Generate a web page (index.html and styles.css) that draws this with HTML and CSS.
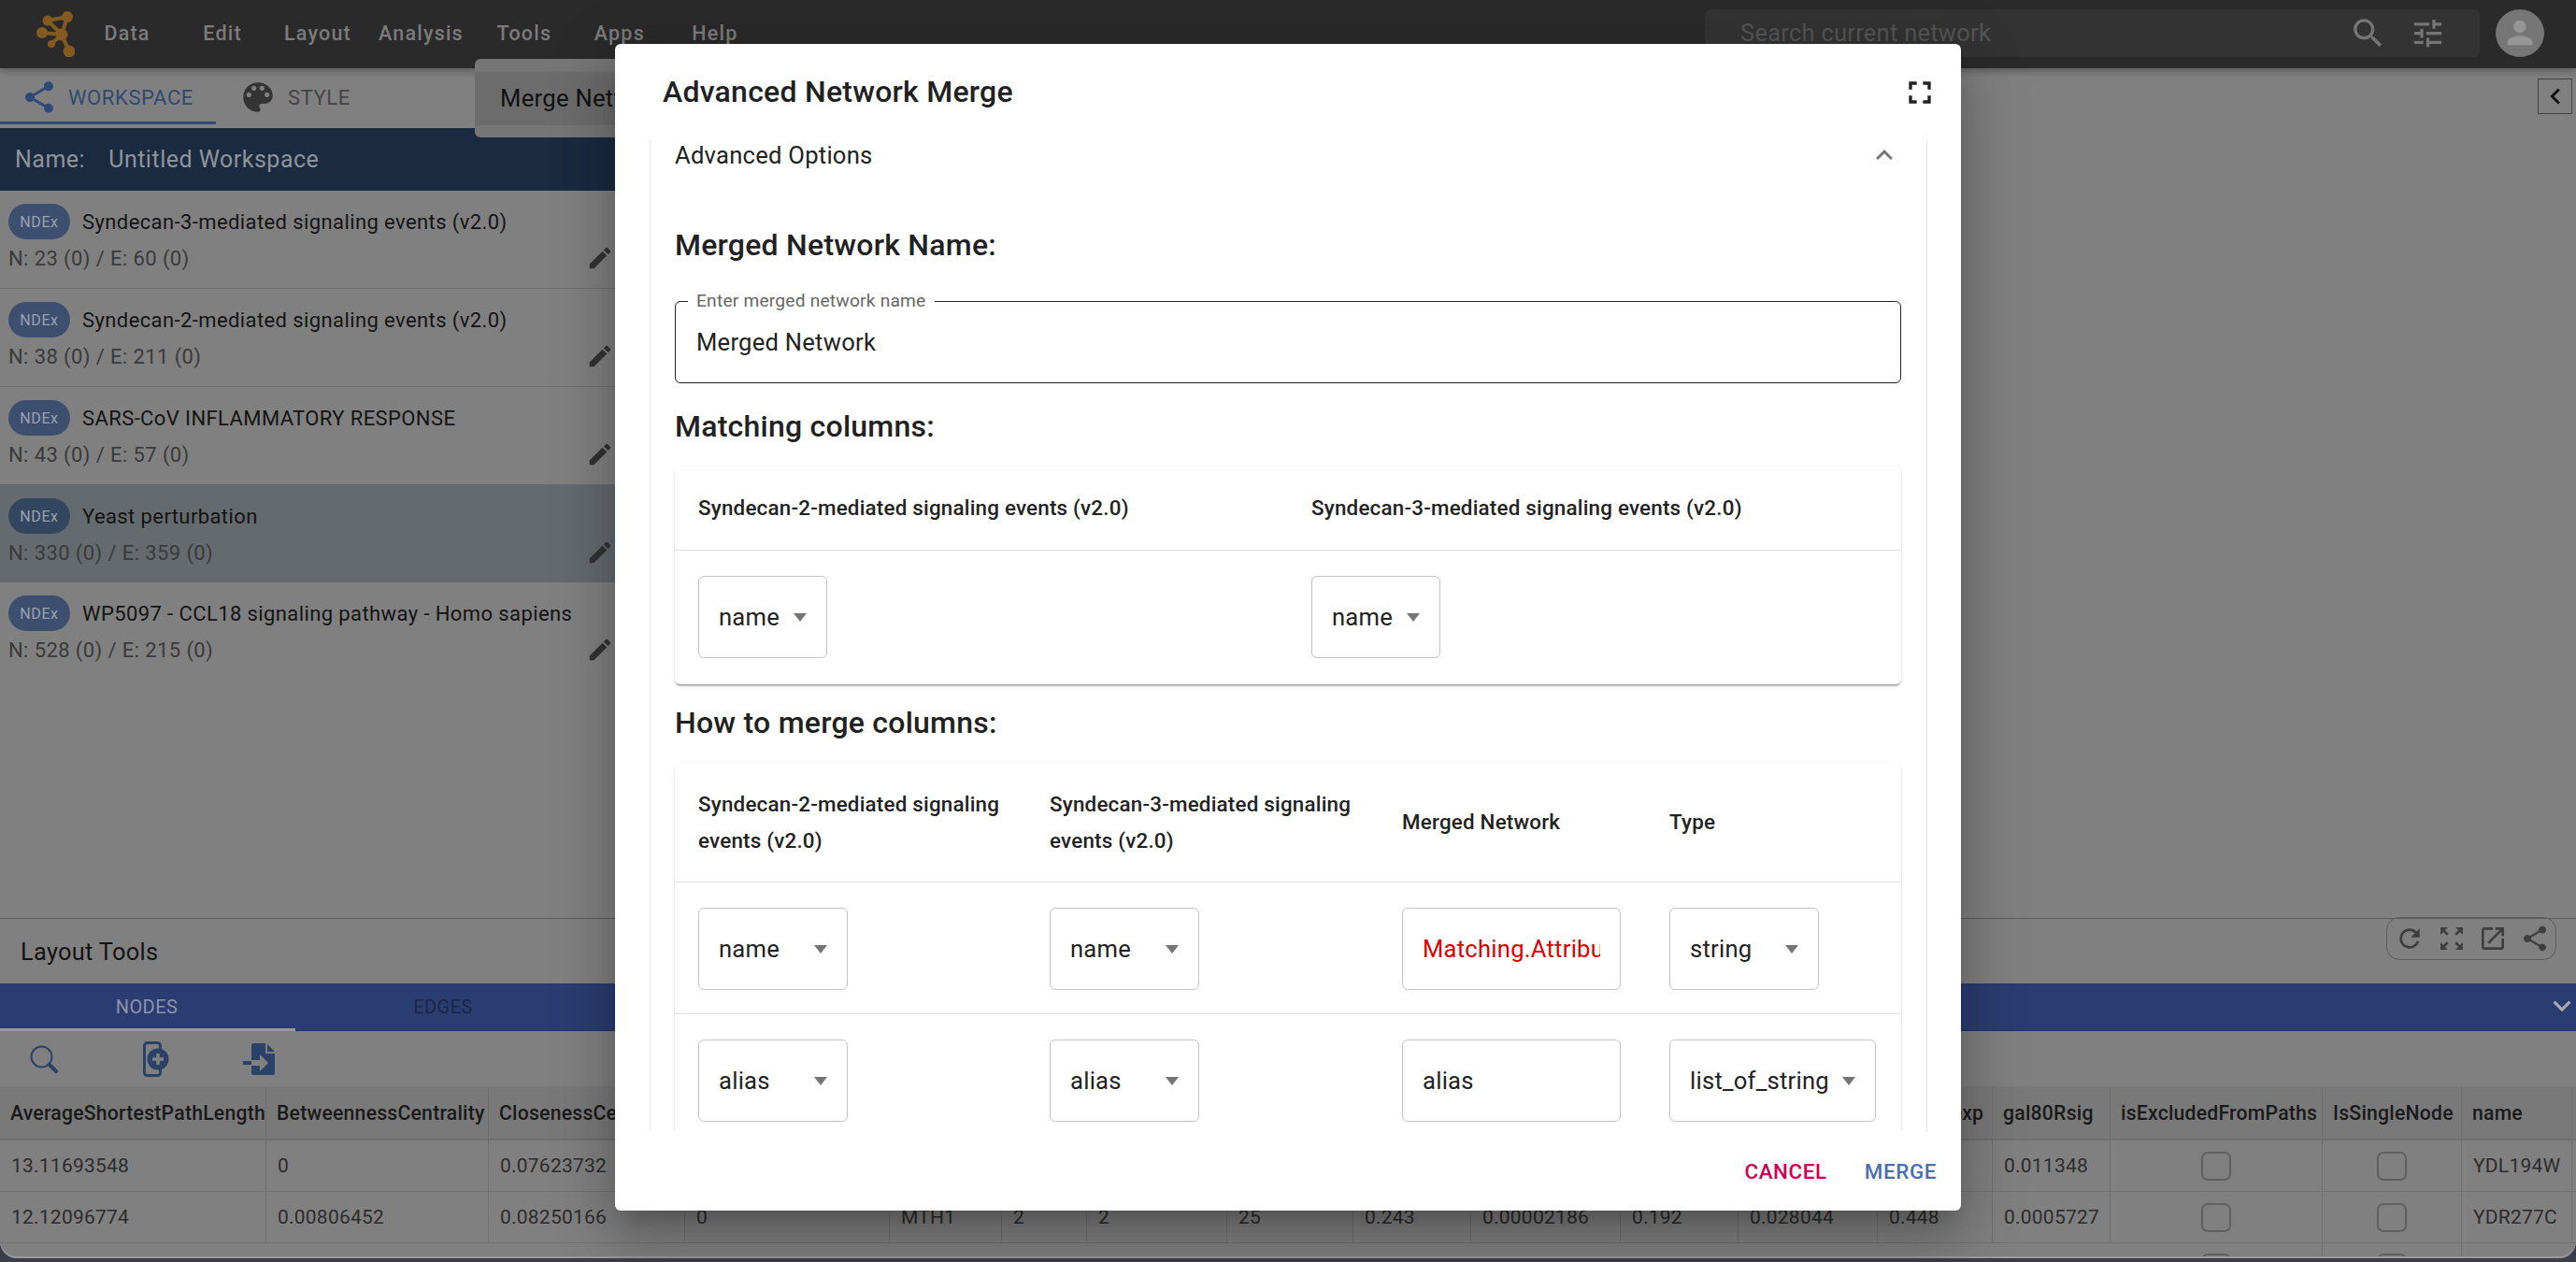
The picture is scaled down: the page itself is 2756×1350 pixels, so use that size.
FILE: index.html
```html
<!DOCTYPE html>
<html lang="en">
<head>
<meta charset="utf-8">
<title>Advanced Network Merge</title>
<link rel="stylesheet" href="styles.css">
</head>
<body>
<div class="app">
  <header class="appbar">
    <svg class="logo" viewBox="0 0 41 50" width="41" height="50"><g stroke="#845a20" stroke-width="4" fill="#845a20"><path d="M12 11 33 7 27 26ZM6 24 27 26M16 36 27 26M35 44 27 26" fill="none"/><circle cx="33" cy="7" r="6" stroke="none"/><circle cx="12" cy="11" r="5.5" stroke="none"/><circle cx="6" cy="24" r="6" stroke="none"/><circle cx="27" cy="26" r="6.5" stroke="none"/><circle cx="16" cy="36" r="4" stroke="none"/><circle cx="35" cy="44" r="6.5" stroke="none"/></g></svg>
    <nav class="nav">
      <span class="nav-item">Data</span><span class="nav-item">Edit</span><span class="nav-item">Layout</span><span class="nav-item">Analysis</span><span class="nav-item">Tools</span><span class="nav-item">Apps</span><span class="nav-item">Help</span>
    </nav>
    <div class="search">
      <span class="search-text">Search current network</span>
      <svg class="ic-search" viewBox="0 0 24 24" width="41" height="41"><path d="M15.5 14h-.79l-.28-.27C15.41 12.59 16 11.11 16 9.5 16 5.91 13.09 3 9.5 3S3 5.91 3 9.5 5.91 16 9.5 16c1.61 0 3.09-.59 4.23-1.57l.27.28v.79l5 4.99L20.49 19l-4.99-5zm-6 0C7.01 14 5 11.99 5 9.5S7.01 5 9.5 5 14 7.01 14 9.5 11.99 14 9.5 14z"/></svg>
      <svg class="ic-search" viewBox="0 0 24 24" width="39" height="39"><path d="M3 17v2h6v-2H3zM3 5v2h10V5H3zm10 16v-2h8v-2h-8v-2h-2v6h2zM7 9v2H3v2h4v2h2V9H7zm14 4v-2H11v2h10zm-6-4h2V7h4V5h-4V3h-2v6z"/></svg>
    </div>
    <div class="avatar"><svg viewBox="0 0 24 24" width="40" height="40"><path d="M12 12c2.21 0 4-1.79 4-4s-1.79-4-4-4-4 1.79-4 4 1.79 4 4 4zm0 2c-2.67 0-8 1.34-8 4v2h16v-2c0-2.66-5.33-4-8-4z"/></svg></div>
  </header>

  <div class="main">
    <aside class="side">
      <div class="tabs">
        <div class="tab tab-active">
          <svg viewBox="0 0 24 24" width="40" height="40"><path d="M18 16.08c-.76 0-1.44.3-1.96.77L8.91 12.7c.05-.23.09-.46.09-.7s-.04-.47-.09-.7l7.05-4.11c.54.5 1.25.81 2.04.81 1.66 0 3-1.34 3-3s-1.34-3-3-3-3 1.34-3 3c0 .24.04.47.09.7L8.04 9.81C7.5 9.31 6.79 9 6 9c-1.66 0-3 1.34-3 3s1.34 3 3 3c.79 0 1.5-.31 2.04-.81l7.12 4.16c-.05.21-.08.43-.08.65 0 1.61 1.31 2.92 2.92 2.92 1.61 0 2.92-1.31 2.92-2.92s-1.31-2.92-2.92-2.92z"/></svg>
          <span>WORKSPACE</span>
        </div>
        <div class="tab tab-style">
          <svg viewBox="0 0 24 24" width="42" height="42"><path d="M12 3c-4.97 0-9 4.03-9 9s4.03 9 9 9c.83 0 1.5-.67 1.5-1.5 0-.39-.15-.74-.39-1.01-.23-.26-.38-.61-.38-.99 0-.83.67-1.5 1.5-1.5H16c2.76 0 5-2.24 5-5 0-4.42-4.03-8-9-8zm-5.5 9c-.83 0-1.5-.67-1.5-1.5S5.67 9 6.5 9 8 9.67 8 10.5 7.33 12 6.5 12zm3-4C8.67 8 8 7.33 8 6.5S8.67 5 9.5 5s1.5.67 1.5 1.5S10.33 8 9.5 8zm5 0c-.83 0-1.5-.67-1.5-1.5S13.67 5 14.5 5s1.5.67 1.5 1.5S15.33 8 14.5 8zm3 4c-.83 0-1.5-.67-1.5-1.5S16.67 9 17.5 9s1.5.67 1.5 1.5-.67 1.5-1.5 1.5z"/></svg>
          <span>STYLE</span>
        </div>
      </div>
      <div class="ws-name"><span>Name:</span><span>Untitled Workspace</span></div>
      <ul class="net-list">
        <li class="net">
          <div class="net-top"><span class="chip">NDEx</span><span class="net-title">Syndecan-3-mediated signaling events (v2.0)</span></div>
          <div class="net-sub"><span>N: 23 (0) / E: 60 (0)</span><svg viewBox="0 0 24 24" width="30" height="30"><path d="M3 17.25V21h3.75L17.81 9.94l-3.75-3.75L3 17.25zM20.71 7.04c.39-.39.39-1.02 0-1.41l-2.34-2.34a.9959.9959 0 0 0-1.41 0l-1.83 1.83 3.75 3.75 1.83-1.83z"/></svg></div>
        </li>
        <li class="net">
          <div class="net-top"><span class="chip">NDEx</span><span class="net-title">Syndecan-2-mediated signaling events (v2.0)</span></div>
          <div class="net-sub"><span>N: 38 (0) / E: 211 (0)</span><svg viewBox="0 0 24 24" width="30" height="30"><path d="M3 17.25V21h3.75L17.81 9.94l-3.75-3.75L3 17.25zM20.71 7.04c.39-.39.39-1.02 0-1.41l-2.34-2.34a.9959.9959 0 0 0-1.41 0l-1.83 1.83 3.75 3.75 1.83-1.83z"/></svg></div>
        </li>
        <li class="net">
          <div class="net-top"><span class="chip">NDEx</span><span class="net-title">SARS-CoV INFLAMMATORY RESPONSE</span></div>
          <div class="net-sub"><span>N: 43 (0) / E: 57 (0)</span><svg viewBox="0 0 24 24" width="30" height="30"><path d="M3 17.25V21h3.75L17.81 9.94l-3.75-3.75L3 17.25zM20.71 7.04c.39-.39.39-1.02 0-1.41l-2.34-2.34a.9959.9959 0 0 0-1.41 0l-1.83 1.83 3.75 3.75 1.83-1.83z"/></svg></div>
        </li>
        <li class="net net-selected">
          <div class="net-top"><span class="chip">NDEx</span><span class="net-title">Yeast perturbation</span></div>
          <div class="net-sub"><span>N: 330 (0) / E: 359 (0)</span><svg viewBox="0 0 24 24" width="30" height="30"><path d="M3 17.25V21h3.75L17.81 9.94l-3.75-3.75L3 17.25zM20.71 7.04c.39-.39.39-1.02 0-1.41l-2.34-2.34a.9959.9959 0 0 0-1.41 0l-1.83 1.83 3.75 3.75 1.83-1.83z"/></svg></div>
        </li>
        <li class="net net-last">
          <div class="net-top"><span class="chip">NDEx</span><span class="net-title">WP5097 - CCL18 signaling pathway - Homo sapiens</span></div>
          <div class="net-sub"><span>N: 528 (0) / E: 215 (0)</span><svg viewBox="0 0 24 24" width="30" height="30"><path d="M3 17.25V21h3.75L17.81 9.94l-3.75-3.75L3 17.25zM20.71 7.04c.39-.39.39-1.02 0-1.41l-2.34-2.34a.9959.9959 0 0 0-1.41 0l-1.83 1.83 3.75 3.75 1.83-1.83z"/></svg></div>
        </li>
      </ul>
    </aside>
    <section class="canvas">
      <button class="collapse"><svg viewBox="0 0 24 24" width="34" height="34"><path d="M15.41 7.41L14 6l-6 6 6 6 1.41-1.41L10.83 12z"/></svg></button>
    </section>
  </div>

  <section class="panel">
    <div class="panel-title">
      <span>Layout Tools</span>
      <div class="float-tools">
        <svg viewBox="0 0 24 24" width="32" height="32"><path d="M17.65 6.35C16.2 4.9 14.21 4 12 4c-4.42 0-7.99 3.58-7.99 8s3.57 8 7.99 8c3.73 0 6.84-2.55 7.73-6h-2.08c-.82 2.33-3.04 4-5.65 4-3.31 0-6-2.69-6-6s2.69-6 6-6c1.66 0 3.14.69 4.22 1.78L13 11h7V4l-2.35 2.35z"/></svg>
        <svg viewBox="0 0 24 24" width="32" height="32"><path d="M15 3l2.3 2.3-2.89 2.87 1.42 1.42L18.7 6.7 21 9V3zM3 9l2.3-2.3 2.87 2.89 1.42-1.42L6.7 5.3 9 3H3zm6 12l-2.3-2.3 2.89-2.87-1.42-1.42L5.3 17.3 3 15v6zm12-6l-2.3 2.3-2.87-2.89-1.42 1.42 2.89 2.87L15 21h6z"/></svg>
        <svg viewBox="0 0 24 24" width="32" height="32"><path d="M19 19H5V5h7V3H5c-1.11 0-2 .9-2 2v14c0 1.1.89 2 2 2h14c1.1 0 2-.9 2-2v-7h-2v7zM14 3v2h3.59l-9.83 9.83 1.41 1.41L19 6.41V10h2V3h-7z"/></svg>
        <svg viewBox="0 0 24 24" width="32" height="32"><path d="M18 16.08c-.76 0-1.44.3-1.96.77L8.91 12.7c.05-.23.09-.46.09-.7s-.04-.47-.09-.7l7.05-4.11c.54.5 1.25.81 2.04.81 1.66 0 3-1.34 3-3s-1.34-3-3-3-3 1.34-3 3c0 .24.04.47.09.7L8.04 9.81C7.5 9.31 6.79 9 6 9c-1.66 0-3 1.34-3 3s1.34 3 3 3c.79 0 1.5-.31 2.04-.81l7.12 4.16c-.05.21-.08.43-.08.65 0 1.61 1.31 2.92 2.92 2.92 1.61 0 2.92-1.31 2.92-2.92s-1.31-2.92-2.92-2.92z"/></svg>
      </div>
    </div>
    <div class="bluebar">
      <div class="btab btab-active">NODES</div>
      <div class="btab">EDGES</div>
      <svg class="bchev" viewBox="0 0 24 24" width="38" height="38"><path d="M16.59 8.59L12 13.17 7.41 8.59 6 10l6 6 6-6z"/></svg>
    </div>
    <div class="tool-row">
      <svg class="tool-a" viewBox="0 0 30 30" width="30" height="30"><circle cx="12.5" cy="12.5" r="11" fill="none" stroke="#2b4268" stroke-width="2"/><path d="M21 21l7 7" stroke="#2b4268" stroke-width="4" stroke-linecap="round"/></svg>
      <svg class="tool-b" viewBox="0 0 28 38" width="28" height="38"><rect x="1.5" y="1.5" width="17" height="35" rx="3" fill="none" stroke="#2b4268" stroke-width="3"/><circle cx="16" cy="19" r="11.5" fill="#2b4268"/><path d="M10 19h12M16 13v12" stroke="#808080" stroke-width="3.5"/></svg>
      <svg class="tool-c" viewBox="0 0 35 34" width="35" height="34"><path d="M9 2q0-2 2-2H25L34 9V32q0 2-2 2H11q-2 0-2-2Z" fill="#2b4268"/><path d="M25 0v10h9" fill="none" stroke="#808080" stroke-width="2"/><path d="M1 21H9" stroke="#2b4268" stroke-width="4" stroke-linecap="round"/><path d="M9 18h9v-6l9 9-9 9v-6H9Z" fill="#808080"/></svg>
    </div>
    <div class="grid">
      <div class="tr th">
        <div>AverageShortestPathLength</div><div>BetweennessCentrality</div><div>ClosenessCentrality</div><div>ClusteringCoefficient</div><div>COMMON</div><div>Degree</div><div>Eccentricity</div><div>Neighbors</div><div>gal1RGexp</div><div>gal1RGsig</div><div>gal4RGexp</div><div>gal4RGsig</div><div>gal80Rexp</div><div>gal80Rsig</div><div>isExcludedFromPaths</div><div>IsSingleNode</div><div>name</div>
      </div>
      <div class="tr">
        <div>13.11693548</div><div>0</div><div>0.07623732</div><div></div><div></div><div></div><div></div><div></div><div></div><div></div><div></div><div></div><div></div><div>0.011348</div><div class="cc"><span class="check"></span></div><div class="cc"><span class="check"></span></div><div>YDL194W</div>
      </div>
      <div class="tr">
        <div>12.12096774</div><div>0.00806452</div><div>0.08250166</div><div>0</div><div>MTH1</div><div>2</div><div>2</div><div>25</div><div>0.243</div><div>0.00002186</div><div>0.192</div><div>0.028044</div><div>0.448</div><div>0.0005727</div><div class="cc"><span class="check"></span></div><div class="cc"><span class="check"></span></div><div>YDR277C</div>
      </div>
      <div class="tr tr-cut">
        <div></div><div></div><div></div><div></div><div></div><div></div><div></div><div></div><div></div><div></div><div></div><div></div><div></div><div></div><div class="cc"><span class="check"></span></div><div class="cc"><span class="check"></span></div><div></div>
      </div>
    </div>
  </section>

  <div class="menu"><div class="menu-item">Merge Networks</div></div>
</div>

<div class="modal">
  <div class="modal-head">
    <h2 class="h6">Advanced Network Merge</h2>
    <svg viewBox="0 0 24 24" width="40" height="40"><path d="M7 14H5v5h5v-2H7v-3zm-2-4h2V7h3V5H5v5zm12 7h-3v2h5v-5h-2v3zM14 5v2h3v3h2V5h-5z"/></svg>
  </div>
  <div class="modal-body">
    <div class="accordion">
      <div class="acc-head">
        <span>Advanced Options</span>
        <svg viewBox="0 0 24 24" width="36" height="36"><path d="M12 8l-6 6 1.41 1.41L12 10.83l4.59 4.58L18 14z"/></svg>
      </div>
      <h3 class="h6 h-name">Merged Network Name:</h3>
      <div class="field">
        <span class="field-label">Enter merged network name</span>
        <span>Merged Network</span>
      </div>
      <h3 class="h6 h-sec">Matching columns:</h3>
      <div class="card">
        <div class="row row-head cols-2"><div>Syndecan-2-mediated signaling events (v2.0)</div><div>Syndecan-3-mediated signaling events (v2.0)</div></div>
        <div class="row cols-2 row-end">
          <div><span class="box w-138"><span>name</span><i class="arrow"></i></span></div>
          <div><span class="box w-138"><span>name</span><i class="arrow"></i></span></div>
        </div>
      </div>
      <h3 class="h6 h-sec2">How to merge columns:</h3>
      <div class="card">
        <div class="row row-head row-tall cols-4"><div>Syndecan-2-mediated signaling events (v2.0)</div><div>Syndecan-3-mediated signaling events (v2.0)</div><div>Merged Network</div><div>Type</div></div>
        <div class="row row-short cols-4">
          <div><span class="box w-160"><span>name</span><i class="arrow"></i></span></div>
          <div><span class="box w-160"><span>name</span><i class="arrow"></i></span></div>
          <div><span class="box w-234"><span class="clip red">Matching.Attribute</span></span></div>
          <div><span class="box w-160"><span>string</span><i class="arrow"></i></span></div>
        </div>
        <div class="row cols-4">
          <div><span class="box w-160"><span>alias</span><i class="arrow"></i></span></div>
          <div><span class="box w-160"><span>alias</span><i class="arrow"></i></span></div>
          <div><span class="box w-234"><span class="clip">alias</span></span></div>
          <div><span class="box w-221"><span>list_of_string</span><i class="arrow"></i></span></div>
        </div>
      </div>
    </div>
  </div>
  <div class="modal-foot">
    <span class="btn btn-cancel">CANCEL</span>
    <span class="btn btn-merge">MERGE</span>
  </div>
</div>
</body>
</html>
```
FILE: styles.css
```css
* { box-sizing: border-box; }
html, body { margin: 0; height: 1350px; overflow: hidden; }
body { background: #3a3e4a; font-family: Roboto, "Liberation Sans", sans-serif; color: #222; position: relative; }
svg { display: block; flex: none; }

.app { height: 1344px; background: #808080; border-radius: 0 0 18px 18px; overflow: hidden; display: flex; flex-direction: column; position: relative; box-shadow: 0 2px 0 #999; }

.appbar { height: 73px; flex: none; background: #2a2a2a; display: flex; align-items: center; padding-left: 39px; position: relative; z-index: 2; box-shadow: 0 3px 8px rgba(0,0,0,.3); }
.logo { margin-top: -1px; }
.nav { display: flex; margin-left: 5px; padding-bottom: 3px; }
.nav-item { min-width: 102px; padding: 0 14px; text-align: center; font-size: 21.5px; font-weight: 500; letter-spacing: 1.2px; color: #7b7b7b; }
.search { margin-left: auto; width: 829px; height: 51px; background: #333; border-radius: 6px; display: flex; align-items: center; padding-left: 38px; margin-bottom: 3px; fill: #757575; }
.search-text { flex: 1; font-size: 25.4px; letter-spacing: .3px; color: #555; }
.ic-search { margin-right: 24px; }
.ic-search + .ic-search { margin-right: 36px; }
.avatar { width: 52px; height: 51px; margin: 0 34px 3px 17px; border-radius: 50%; background: #767676; display: flex; align-items: center; justify-content: center; fill: #969696; }

.main { height: 909px; flex: none; display: flex; }
.side { width: 658px; flex: none; display: flex; flex-direction: column; }
.tabs { height: 64px; display: flex; flex: none; }
.tab { display: flex; align-items: center; font-size: 22px; font-weight: 400; letter-spacing: .6px; padding-top: 5px; height: 60px; }
.tab-active { width: 231px; padding-left: 22px; gap: 11px; color: #2f4a72; fill: #2c4a78; border-bottom: 3px solid #2c4a78; }
.tab-style { margin-left: 24px; gap: 11px; color: #444; fill: #333; padding-top: 2px; }
.ws-name { height: 67px; flex: none; background: #1a2a40; display: flex; align-items: center; gap: 25px; padding-left: 16px; font-size: 25px; letter-spacing: .5px; color: #8f949b; }
.net-list { list-style: none; margin: 0; padding: 0; }
.net { height: 105px; padding: 14px 0 0 9px; border-bottom: 1px solid #6f6f6f; }
.net-selected { background: #646a6e; border-bottom: 0; margin-top: -1px; padding-top: 15px; }
.net-last { border-bottom: 0; }
.net-top { display: flex; align-items: center; gap: 13px; height: 38px; }
.chip { width: 66px; height: 38px; border-radius: 19px; background: #3c4f6e; color: #98a2b0; display: flex; align-items: center; justify-content: center; font-size: 16px; letter-spacing: .6px; }
.net-selected .chip { background: #334660; }
.net-title { font-size: 22px; letter-spacing: .4px; color: #141414; white-space: nowrap; padding-top: 1px; }
.net-sub { display: flex; justify-content: space-between; font-size: 22px; letter-spacing: .4px; color: #3a3a3a; margin-top: 8px; height: 30px; fill: #333; }
.net-sub svg { margin: -3px 1px 0 0; }

.canvas { flex: 1; display: flex; justify-content: flex-end; align-items: flex-start; padding: 11px 4px 0 0; }
.collapse { width: 37px; height: 38px; padding: 0; background: transparent; border: 1px solid #444; display: flex; align-items: center; justify-content: center; fill: #111; }

.panel { flex: 1; display: flex; flex-direction: column; }
.panel-title { height: 70px; flex: none; border-top: 1px solid #5c5c5c; display: flex; align-items: center; justify-content: space-between; padding: 0 21px 0 22px; font-size: 25.4px; letter-spacing: .3px; color: #141414; }
.float-tools { width: 182px; height: 46px; margin-top: -28px; border: 1px solid #5c5c5c; border-radius: 14px; display: flex; align-items: center; justify-content: space-between; padding: 0 6px 0 8px; fill: #3e3e3e; }
.bluebar { height: 51px; flex: none; background: #2a3d72; display: flex; border-bottom: 1px solid #22355e; }
.btab { width: 316px; padding-right: 2px; text-align: center; font-size: 20px; line-height: 51px; letter-spacing: .4px; color: #1a2645; }
.btab-active { color: #8c93a8; border-bottom: 3px solid #999; height: 51px; }
.btab + .btab { width: 318px; }
.bchev { margin: 5px -4px 0 auto; fill: #aaa; }
.tool-row { height: 59px; flex: none; display: flex; align-items: center; padding-left: 32px; }
.tool-b { margin-left: 91px; }
.tool-c { margin-left: 79px; }
.tr { display: grid; grid-template-columns: 285px 238px 210px 219px 120px 91px 150px 135px 126px 160px 126px 149px 123px 126px 227px 149px 118px 4px; height: 55px; border-bottom: 1px solid #707070; }
.tr > div { display: flex; align-items: center; padding: 0 12px; border-right: 1px solid #707070; font-size: 21px; letter-spacing: .23px; color: #2c2c2c; white-space: nowrap; overflow: hidden; }
.th { height: 58px; background: #797979; border-bottom: 2px solid #6e6e6e; }
.tr.th > div { font-weight: 500; padding: 0 11px; font-size: 21.2px; color: #1a1a1a; overflow: visible; }
.cc { justify-content: center; }
.check { width: 32px; height: 31px; border: 2px solid #606060; border-radius: 7px; flex: none; }
.tr-cut { align-items: start; }
.tr-cut .cc { padding-top: 11px; align-items: flex-start; }

.menu { position: absolute; left: 508px; top: 63px; width: 220px; height: 84px; padding-top: 14px; background: #767676; border-radius: 6px; z-index: 3; }
.menu-item { height: 57px; line-height: 57px; background: #6c6c6c; padding-left: 27px; font-size: 25.6px; letter-spacing: .3px; color: #111; white-space: nowrap; overflow: hidden; }

.modal { position: absolute; left: 658px; top: 47px; width: 1440px; height: 1248px; background: #fff; border-radius: 6px; display: flex; flex-direction: column; z-index: 5; box-shadow: 0 16px 22px -10px rgba(0,0,0,.2), 0 36px 57px 4px rgba(0,0,0,.14), 0 14px 69px 12px rgba(0,0,0,.12); }
.h6 { margin: 0; font-size: 32px; font-weight: 500; line-height: 45px; letter-spacing: .24px; color: #212121; }
.modal-head { height: 103px; flex: none; display: flex; align-items: center; justify-content: space-between; padding: 0 24px 0 51px; fill: #212121; }
.modal-body { flex: 1; min-height: 0; padding: 0 36px 0 37px; overflow: hidden; }
.accordion { width: 1367px; height: 100%; overflow: hidden; border: solid #e6e6e6; border-width: 0 1px; padding: 0 26px; }
.acc-head { height: 32px; display: flex; align-items: center; justify-content: space-between; padding-right: 1px; font-size: 25.6px; letter-spacing: .24px; color: #212121; fill: #757575; }
.h-name { margin-top: 58px; }
.field { position: relative; width: 1312px; height: 88px; margin-top: 37px; border: 1.5px solid #222; border-radius: 6px; display: flex; align-items: center; padding-left: 22px; font-size: 25.6px; letter-spacing: .24px; color: #222; }
.field-label { position: absolute; left: 13px; top: -12px; padding: 0 9px; background: #fff; font-size: 19.2px; line-height: 21px; letter-spacing: .2px; color: #666; }
.h-sec { margin-top: 24px; margin-bottom: 20px; }
.h-sec2 { margin-top: 19px; margin-bottom: 20px; }
.card { width: 1312px; border-radius: 6px; box-shadow: 0 3px 2px -2px rgba(0,0,0,.3), 0 2px 2px 0 rgba(0,0,0,.14), 0 2px 5px 0 rgba(0,0,0,.08); }
.row { display: grid; height: 142px; padding-top: 27px; border-bottom: 1.5px solid #e0e0e0; font-size: 25.6px; letter-spacing: .24px; color: #222; }
.row > div { padding-left: 25px; }
.row-end { border-bottom: 0; height: 143px; }
.row-short { height: 141px; }
.row-head { height: 90px; padding-top: 0; font-size: 22.4px; font-weight: 500; line-height: 39px; letter-spacing: .2px; align-items: center; }
.row-tall { height: 128px; }
.cols-2 { grid-template-columns: 656px 1fr; }
.cols-4 { grid-template-columns: 376px 377px 286px 273px; }
.box { height: 88px; border: 1.5px solid #c4c4c4; border-radius: 6px; display: flex; align-items: center; justify-content: space-between; padding: 0 21px; }
.w-138 { width: 138px; }
.w-160 { width: 160px; }
.w-221 { width: 221px; }
.w-234 { width: 234px; }
.clip { display: block; width: 190px; overflow: hidden; white-space: nowrap; }
.red { color: #dd0000; }
.arrow { display: block; width: 0; height: 0; flex: none; border: solid transparent; border-width: 9px 7.5px 0; border-top-color: #757575; }
.modal-foot { height: 85px; flex: none; display: flex; justify-content: flex-end; align-items: center; gap: 40px; padding-right: 26px; }
.btn { font-size: 22.4px; font-weight: 500; letter-spacing: .6px; }
.btn-cancel { color: #cc0055; }
.btn-merge { color: #4a70b0; }
```
